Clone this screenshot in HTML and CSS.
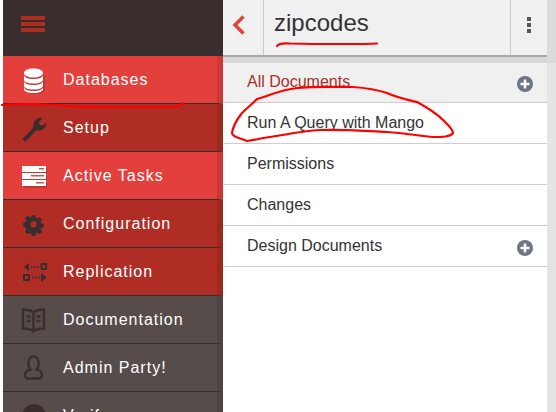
FILE: index.html
```html
<!DOCTYPE html>
<html lang="en">
<head>
<meta charset="utf-8">
<title>zipcodes</title>
<link rel="stylesheet" href="styles.css">
</head>
<body>
<div class="app">
  <aside class="sidebar">
    <div class="brand">
      <div class="burger"><span></span><span></span><span></span></div>
    </div>
    <nav class="nav">
      <a class="item active">
        <svg class="ico" viewBox="0 -1.500 26 28"><path class="shade" d="M5 8v14c0 3 4 4.500 9.500 4.500S24 25 24 22V8z"/><path class="lite" d="M3 5.500C3 3 7 1 12.500 1S22 3 22 5.500 18 10 12.500 10 3 8 3 5.500zM3 8c1 2.500 5 3.500 9.500 3.500S21 10.500 22 8v4c0 2.500-4 4-9.500 4S3 14.500 3 12zM3 14c1 2.500 5 3.500 9.500 3.500S21 16.500 22 14v4c0 2.500-4 4-9.500 4S3 20.500 3 18zM3 20c1 2.500 5 3.500 9.500 3.500S21 22.500 22 20v1.500c0 2.500-4 4-9.500 4S3 24 3 21.500z"/></svg>
        <span>Databases</span>
      </a>
      <a class="item">
        <svg class="ico" viewBox="0 0 26 28"><path class="dark" d="M1.500 25 12.500 13.500C11.800 10 13 7 15 5.500 17 4 19.500 3.500 21.500 4L18 8l1 3 3 .5 3-3c.500 2.500-.500 5-2.500 6.500-2 1.500-4.500 2-7 1L4 28z"/></svg>
        <span>Setup</span>
      </a>
      <a class="item active">
        <svg class="ico" viewBox="-1 0 26 28"><path class="shade" d="M2 6h24v6H2zM2 13h24v6H2zM2 20h24v6H2z"/><path class="lite" d="M0 4h24v6H0zM0 11h24v6H0zM0 18h24v6H0z"/><path class="mark" d="M17 6h5v1.500h-5zM9 13h13v1.500H9zM14 20h8v1.500h-8z"/></svg>
        <span>Active Tasks</span>
      </a>
      <a class="item">
        <svg class="ico" viewBox="-2 -2 30 32"><path class="dark" fill-rule="evenodd" d="M10.500 4h4l.6 2.800 2 .8 2.400-1.500 2.800 2.800-1.500 2.400.8 2 2.800.6v4l-2.800.6-.8 2 1.500 2.400-2.800 2.800-2.400-1.500-2 .8-.6 2.800h-4l-.6-2.800-2-.8-2.400 1.500-2.800-2.800 1.500-2.400-.8-2L.600 16.400v-4l2.800-.6.800-2-1.500-2.400 2.800-2.800 2.400 1.500 2-.8zM12.500 10.800a3.600 3.600 0 1 0 0 7.200 3.600 3.600 0 0 0 0-7.200z"/></svg>
        <span>Configuration</span>
      </a>
      <a class="item">
        <svg class="ico" viewBox="-2 0 26 28"><path class="dark" fill-rule="evenodd" d="M1 9l5-4v8zM8 8h1.500v2H8zM11 8h1.500v2H11zM14 8h1.500v2H14zM17.500 5H24v7h-6.500zM19.500 7v3H22V7zM0 16h7v7H0zM2 18v3h3v-3zM9 18.500h1.500v2H9zM12 18.500h1.500v2H12zM15 18.500h1.500v2H15zM18 15l6 4.500-6 4.500z"/></svg>
        <span>Replication</span>
      </a>
      <a class="item muted">
        <svg class="ico" viewBox="0 0 26 28"><path class="book" d="M12.500 6.500C10 4.500 5 3.500 2 3.500v19c3.500 0 7.500.5 10.500 3 3-2.500 7-3 10.500-3v-19c-3 0-8 1-10.500 3zM12.500 6.500v19M5.500 10.500h4M5.500 15h4M15.500 10.500h4M15.500 15h4"/></svg>
        <span>Documentation</span>
      </a>
      <a class="item muted">
        <svg class="ico" viewBox="0 0 26 28"><path class="book" d="M7.500 8a5 5.500 0 0 1 10 0v3c0 2-1 3-2 4.500 3.500.5 5.500 3 5.500 5.500 0 2.500-2 3.500-4 3.500H8c-2 0-4-1-4-3.500 0-2.500 2-5 5.500-5.500-1-1.500-2-2.500-2-4.500z"/></svg>
        <span>Admin Party!</span>
      </a>
      <a class="item muted">
        <svg class="ico" viewBox="0 0 26 28"><circle class="dark" cx="13" cy="14" r="12"/></svg>
        <span>Verify</span>
      </a>
    </nav>
  </aside>
  <main class="main">
    <div class="content">
      <header class="topbar">
        <div class="back"><svg class="chev" viewBox="0 0 14 20"><path d="M11.500 1.500 3 10l8.500 8.500"/></svg></div>
        <h1 class="title">zipcodes</h1>
        <div class="more"><span></span><span></span><span></span></div>
      </header>
      <div class="band"></div>
      <ul class="menu">
        <li class="row current"><span>All Documents</span><svg class="plus" viewBox="0 0 16 16"><circle cx="8" cy="8" r="8"/><path d="M8 3.500v9M3.500 8h9"/></svg></li>
        <li class="row"><span>Run A Query with Mango</span></li>
        <li class="row"><span>Permissions</span></li>
        <li class="row"><span>Changes</span></li>
        <li class="row"><span>Design Documents</span><svg class="plus" viewBox="0 0 16 16"><circle cx="8" cy="8" r="8"/><path d="M8 3.500v9M3.500 8h9"/></svg></li>
      </ul>
    </div>
    <div class="scrollbar"><div class="scrollbar-top"></div></div>
  </main>
</div>
<svg class="scribble" viewBox="0 0 556 412">
  <path d="M2 105C12 104 22 104 33 104C60 105 80 107 100 107C125 107 150 107 167 107C174 107 180 107 184 103"/>
  <path d="M277 46C279 43 284 43 290 43.500C310 44 330 44 345 44C355 44 368 44 377 43.500"/>
  <path d="M247 141C240 138 232 137 232 133C233 126 238 118 242 113C246 109 252 104 257 99C268 96 280 90 297 88C315 86 335 87 353 87C368 88 378 90 387 93C398 98 408 100 417 102C428 108 436 113 443 120C448 125 453 129 453 133C450 137 443 137 433 137C420 136 405 133 387 132C365 131 342 129 320 130C300 131 285 135 270 137C262 138 255 140 247 141"/>
</svg>
</body>
</html>
```
FILE: styles.css
```css
* { box-sizing: border-box; }
html, body { margin: 0; height: 100%; overflow: hidden; background: #fff; }
body { font-family: "Liberation Sans", Arial, sans-serif; }

.app { display: flex; height: 412px; padding-left: 3px; }

.sidebar { width: 220px; flex: none; display: flex; flex-direction: column; overflow: hidden; background: #3a2d2d; }
.brand { height: 56px; flex: none; padding: 16px 18px; }
.burger { display: flex; flex-direction: column; gap: 2px; width: 24px; }
.burger span { height: 4px; background: #ad2d24; }

.nav { display: block; }
.item {
  display: flex; align-items: center; gap: 16px;
  height: 48px; padding: 0 6px 0 18px;
  border-bottom: 1px solid #3a2d2d;
  border-right: 6px solid rgba(0, 0, 0, .1);
  background: #af2d24; color: #fff;
  font-size: 16px; letter-spacing: 1px;
}
.item.active { background: #e3403d; }
.item.muted { background: #564d4b; }
.ico { width: 26px; height: 28px; flex: none; }
.ico .lite { fill: #fff; }
.ico .shade { fill: #a9362f; opacity: .7; }
.ico .mark { fill: #d5524c; }
.ico .dark { fill: #3a2d2d; }
.ico .book { fill: none; stroke: #3a2d2d; stroke-width: 2.400; }

.main { flex: 1; display: flex; min-width: 0; }
.content { flex: 1; min-width: 0; background: #fff; }
.scrollbar { width: 9px; flex: none; background: #e4e4e4; }
.scrollbar-top { height: 63px; background: #dbdbdb; }

.topbar { display: flex; align-items: stretch; height: 57px; background: #f0f0f0; border-bottom: 2px solid #a8a8a8; color: #333; }
.back { width: 41px; flex: none; display: flex; align-items: center; padding: 0 0 6px 9px; border-right: 1px solid #ccc; }
.chev { width: 14px; height: 20px; }
.chev path { fill: none; stroke: #e5423e; stroke-width: 3.500; }
.title { flex: 1; margin: 0; padding: 0 0 10px 10px; font-size: 24px; font-weight: 400; line-height: 45px; color: #333; }
.more { width: 37px; flex: none; display: flex; flex-direction: column; align-items: center; justify-content: center; gap: 2px; border-left: 1px solid #ccc; padding-bottom: 6px; }
.more span { width: 4px; height: 4px; background: #555; }

.band { height: 6px; background: #d8d8d8; }

.menu { list-style: none; margin: 0; padding: 0; }
.row {
  display: flex; align-items: center; justify-content: space-between;
  height: 41px; padding: 0 14px 0 24px;
  border-bottom: 1px solid #ccced6;
  font-size: 16px; color: #333;
}
.row.current { height: 40px; padding-bottom: 2px; background: #f0f0f0; color: #a8302a; }
.plus { width: 16px; height: 16px; flex: none; margin-top: 3px; }
.row.current .plus { margin-top: 5px; }
.plus circle { fill: #6b7684; }
.plus path { stroke: #fff; stroke-width: 2.500; fill: none; }

.scribble { position: absolute; left: 0; top: 0; width: 556px; height: 412px; pointer-events: none; }
.scribble path { fill: none; stroke: #f00; stroke-width: 2.200; stroke-linecap: round; stroke-linejoin: round; }
```
